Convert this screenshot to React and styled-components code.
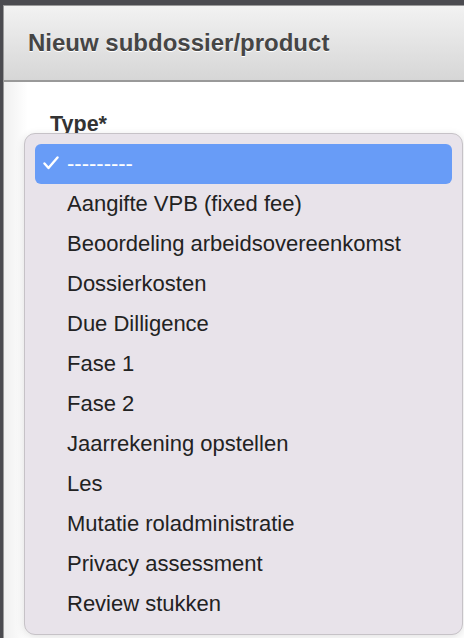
import styled, { createGlobalStyle } from "styled-components"

const GlobalStyle = createGlobalStyle`
    html, body {
        margin: 0;
        padding: 0;
        background: #4b4b50;
        font-family: "Liberation Sans", Arial, sans-serif;
    }
`

const Screen = styled.div`
    width: 464px;
    height: 638px;
    padding: 5px 0 0 3px;
    box-sizing: border-box;
    overflow: hidden;
`

const Dialog = styled.div`
    position: relative;
    height: 100%;
    background: #fff;
    border-left: 1px solid #9a9a9a;
    border-top: 1px solid #9a9a9a;
`

const Header = styled.div`
    height: 76px;
    display: flex;
    align-items: center;
    padding-left: 24px;
    background: linear-gradient(#f2f2f2, #d6d6d6);
    border-bottom: 2px solid #999;
    box-sizing: border-box;
`

const Title = styled.h1`
    margin: 0;
    font-size: 24px;
    font-weight: 700;
    color: #454545;
    text-shadow: 0 1px 0 #fff;
`

const Body = styled.div`
    padding: 30px 0 0 46px;
    background: linear-gradient(90deg, #f0f0f0, #fff 24px);
    height: 100%;
`

const Label = styled.div`
    font-size: 21.5px;
    font-weight: 700;
    color: #333;
`

const Menu = styled.ul`
    position: absolute;
    left: 20px;
    right: 1px;
    top: 127px;
    margin: 0;
    padding: 10px;
    list-style: none;
    background: #e8e3ea;
    border: 1px solid #c6c2c7;
    border-radius: 11px;
    box-shadow: 0 2px 8px rgba(0, 0, 0, 0.12);
`

const Item = styled.li`
    height: 40px;
    display: flex;
    align-items: center;
    padding-left: 32px;
    position: relative;
    border-radius: 6px;
    font-size: 22px;
    color: ${(p) => (p.$selected ? "#fff" : "#222")};
    background: ${(p) => (p.$selected ? "#689cf7" : "transparent")};
`

const Check = styled.svg`
    position: absolute;
    left: 8px;
    top: 12px;
`

const items = [
    "---------",
    "Aangifte VPB (fixed fee)",
    "Beoordeling arbeidsovereenkomst",
    "Dossierkosten",
    "Due Dilligence",
    "Fase 1",
    "Fase 2",
    "Jaarrekening opstellen",
    "Les",
    "Mutatie roladministratie",
    "Privacy assessment",
    "Review stukken",
]

const App = () => {
    return (
        <Screen>
            <GlobalStyle />
            <Dialog>
                <Header>
                    <Title>Nieuw subdossier/product</Title>
                </Header>
                <Body>
                    <Label>Type*</Label>
                </Body>
                <Menu>
                    {items.map((it, i) => (
                        <Item key={it} $selected={i === 0}>
                            {i === 0 && (
                                <Check width="16" height="14" viewBox="0 0 16 14">
                                    <path d="M1.5 7.5 L5.5 12 L14.5 1.5" fill="none" stroke="#fff" strokeWidth="2.4" strokeLinecap="round" strokeLinejoin="round" />
                                </Check>
                            )}
                            {it}
                        </Item>
                    ))}
                </Menu>
            </Dialog>
        </Screen>
    )
}

export default App
